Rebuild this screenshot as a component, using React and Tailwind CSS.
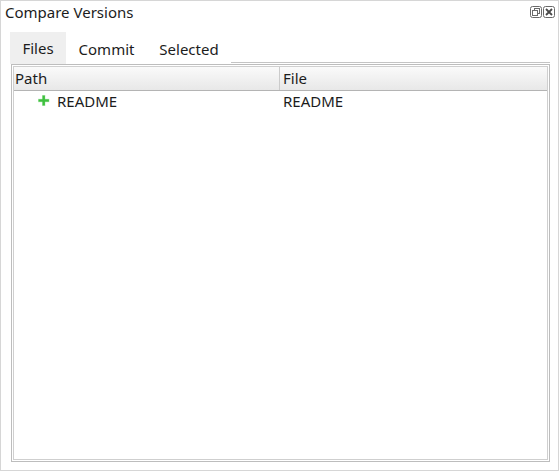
export default function App() {
  return (
    <div
      className="w-[559px] h-[471px] bg-white border border-[#d6d6d6] flex flex-col text-[15px] text-[#1c1c1c]"
      style={{ fontFamily: '"Noto Sans", "Open Sans", sans-serif' }}
    >
      {/* title bar */}
      <div className="h-[24px] flex items-center justify-between pl-[4px] pr-[3px] pb-[2px]">
        <span className="leading-none">Compare Versions</span>
        <div className="flex gap-[1px] self-start mt-[5px]">
          <svg width="12" height="12" viewBox="0 0 12 12">
            <rect x="0.5" y="0.5" width="11" height="11" rx="2" fill="none" stroke="#6a6a6a" />
            <rect x="4.5" y="2.5" width="5" height="5" fill="none" stroke="#6a6a6a" />
            <rect x="2.5" y="4.5" width="5" height="5" fill="white" stroke="#6a6a6a" />
          </svg>
          <svg width="12" height="12" viewBox="0 0 12 12">
            <rect x="0.5" y="0.5" width="11" height="11" rx="2" fill="none" stroke="#6a6a6a" />
            <path d="M3 3 L9 9 M9 3 L3 9" stroke="#4a4a4a" strokeWidth="1.8" />
          </svg>
        </div>
      </div>

      {/* tabs */}
      <div className="flex h-[32px] mt-[7px] pl-[9px] pr-[8px]">
        <div className="w-[56px] bg-[#efefef] flex items-center justify-center">Files</div>
        <div className="w-[81px] flex items-center justify-center pt-[3px]">Commit</div>
        <div className="w-[84px] flex items-center justify-center pt-[3px]">Selected</div>
        <div className="flex-1 border-b border-[#c4c4c4] mb-[1px]" />
      </div>

      {/* table frame */}
      <div className="flex-1 ml-[10px] mr-[8px] mb-[8px] border border-[#bdbdbd] p-px flex">
        <div className="flex-1 border border-[#cfcfcf] flex flex-col">
          <div className="h-[24px] flex bg-gradient-to-b from-[#fafafa] to-[#e8e8e8] border-b border-[#b4b4b4]">
            <div className="w-[265px] flex items-center pl-[1px]">Path</div>
            <div className="flex-1 border-l border-[#cbcbcb] flex items-center pl-[3px]">File</div>
          </div>
          <div className="h-[21px] flex">
            <div className="w-[265px] flex items-center pl-[23px]">
              <svg width="14" height="14" viewBox="0 0 14 14" className="mr-[6px] mb-[2px]">
                <rect x="5" y="1" width="3.4" height="11" fill="#8fe08f" opacity="0.5" />
                <rect x="1" y="4.8" width="11.4" height="3.4" fill="#8fe08f" opacity="0.5" />
                <rect x="5.5" y="1.5" width="2.4" height="10" fill="#3fc03f" />
                <rect x="1.5" y="5.3" width="10.4" height="2.4" fill="#3fc03f" />
              </svg>
              <span>README</span>
            </div>
            <div className="flex-1 flex items-center pl-[4px]">README</div>
          </div>
        </div>
      </div>
    </div>
  );
}
